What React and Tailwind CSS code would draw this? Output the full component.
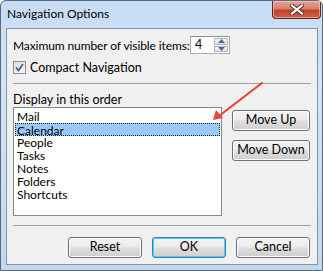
import React from "react";

const font = { fontFamily: 'Lato, "Noto Sans", sans-serif' };

const items = ["Mail", "Calendar", "People", "Tasks", "Notes", "Folders", "Shortcuts"];

function Btn({ label, def, className = "" }) {
  return (
    <button
      type="button"
      className={`flex h-[21px] items-center justify-center rounded-[3px] border text-[12.5px] leading-none text-black ${
        def
          ? "border-[#3c7fb1] shadow-[inset_0_0_0_1px_#48d0f8]"
          : "border-[#707070] shadow-[inset_0_0_0_1px_#fcfcfc]"
      } bg-[linear-gradient(to_bottom,#f2f2f2_0%,#ebebeb_48%,#dddddd_52%,#cfcfcf_100%)] ${className}`}
    >
      {label}
    </button>
  );
}

export default function App() {
  return (
    <div
      style={font}
      className="relative flex h-[271px] w-[323px] flex-col overflow-hidden rounded-t-[6px] border border-[#5a6a7e] bg-[linear-gradient(to_bottom,#c6dcf4_0%,#d3e4f7_30%,#c2d8f1_100%)]"
    >
      {/* title bar */}
      <div className="flex h-[27px] shrink-0 items-start justify-between">
        <span className="pl-[6px] pt-[5px] text-[12px] leading-[16px] text-black">
          Navigation Options
        </span>
        <div className="mr-[1px] flex h-[18px] w-[49px] items-center justify-center rounded-b-[4px] border border-t-0 border-[#5e2624] bg-[linear-gradient(to_bottom,#e8a497_0%,#d7806f_45%,#c33f2b_55%,#d2614a_100%)] shadow-[inset_0_0_0_1px_rgba(255,220,210,0.5)]">
          <svg width="14" height="11" viewBox="0 0 14 11">
            <path
              d="M2 1.5 L12 9.5 M12 1.5 L2 9.5"
              stroke="#4a2a28"
              strokeWidth="4"
              strokeLinecap="square"
            />
            <path
              d="M2 1.5 L12 9.5 M12 1.5 L2 9.5"
              stroke="#ffffff"
              strokeWidth="2.2"
              strokeLinecap="square"
            />
          </svg>
        </div>
      </div>

      {/* client area */}
      <div className="ml-[5px] mr-[4px] flex h-[237px] flex-col border border-[#8793a3] bg-[#f0f0f0] px-[6px] text-[12px] text-black">
        <div className="mt-[7px] flex h-[18px] items-center">
          <span className="w-[177px] whitespace-nowrap leading-[15px] tracking-[-0.1px]">
            Maximum number of visible items:
          </span>
          <div className="flex h-[18px] w-[40px] border border-[#abadb3] border-t-[#8e9094] bg-white">
            <span className="flex flex-1 items-center pl-[4px] text-[12.5px] leading-none">4</span>
            <div className="my-px mr-px flex w-[14px] flex-col gap-px">
              <div className="flex flex-1 items-center justify-center border border-[#b5b5b5] bg-[linear-gradient(to_bottom,#f4f4f4,#e2e2e2)]">
                <svg width="7" height="4" viewBox="0 0 7 4">
                  <path d="M0 4 L3.5 0 L7 4 Z" fill="#4a6ea8" />
                </svg>
              </div>
              <div className="flex flex-1 items-center justify-center border border-[#b5b5b5] bg-[linear-gradient(to_bottom,#f4f4f4,#e2e2e2)]">
                <svg width="7" height="4" viewBox="0 0 7 4">
                  <path d="M0 0 L3.5 4 L7 0 Z" fill="#4a6ea8" />
                </svg>
              </div>
            </div>
          </div>
        </div>

        <div className="mt-[7px] flex h-[13px] items-center">
          <div className="flex h-[13px] w-[13px] items-center justify-center border border-[#8e8f8f] bg-[linear-gradient(to_bottom_right,#dcdcdc,#f8f8f8)]">
            <svg width="9" height="9" viewBox="0 0 9 9">
              <path d="M1 4.5 L3.5 7.5 L8 1" fill="none" stroke="#4a5f97" strokeWidth="1.8" />
            </svg>
          </div>
          <span className="ml-[4px] text-[12.5px] leading-[15px]">Compact Navigation</span>
        </div>

        <div className="mt-[9px] h-px bg-[#a0a0a0]" />

        <div className="mt-[8px] h-[15px] text-[12.5px] leading-[15px]">Display in this order</div>

        <div className="flex">
          <div className="flex h-[109px] w-[209px] flex-col border border-[#828790] bg-white px-px pt-[2px] text-[12px]">
            {items.map((it, i) => (
              <div
                key={it}
                className={`h-[13px] pl-[2px] leading-[13px] ${
                  i === 1 ? "border border-dotted border-[#222] bg-[#99c9f8] pl-px leading-[11px]" : ""
                }`}
              >
                {it}
              </div>
            ))}
          </div>
          <div className="ml-[10px] mt-[3px] flex flex-col gap-[9px]">
            <Btn label="Move Up" className="w-[78px]" />
            <Btn label="Move Down" className="w-[78px]" />
          </div>
        </div>

        <div className="mt-[9px] h-px bg-[#a0a0a0]" />

        <div className="mt-[11px] flex justify-end gap-[10px] pr-px">
          <Btn label="Reset" className="w-[74px]" />
          <Btn label="OK" def className="w-[74px]" />
          <Btn label="Cancel" className="w-[74px]" />
        </div>
      </div>

      {/* annotation arrow */}
      <svg className="pointer-events-none absolute left-0 top-0" width="323" height="271">
        <line x1="261" y1="82" x2="218" y2="115" stroke="#e2483c" strokeWidth="2.2" strokeLinecap="round" />
        <path d="M212 119 L215 109 L222 117 Z" fill="#e2483c" />
      </svg>
    </div>
  );
}
